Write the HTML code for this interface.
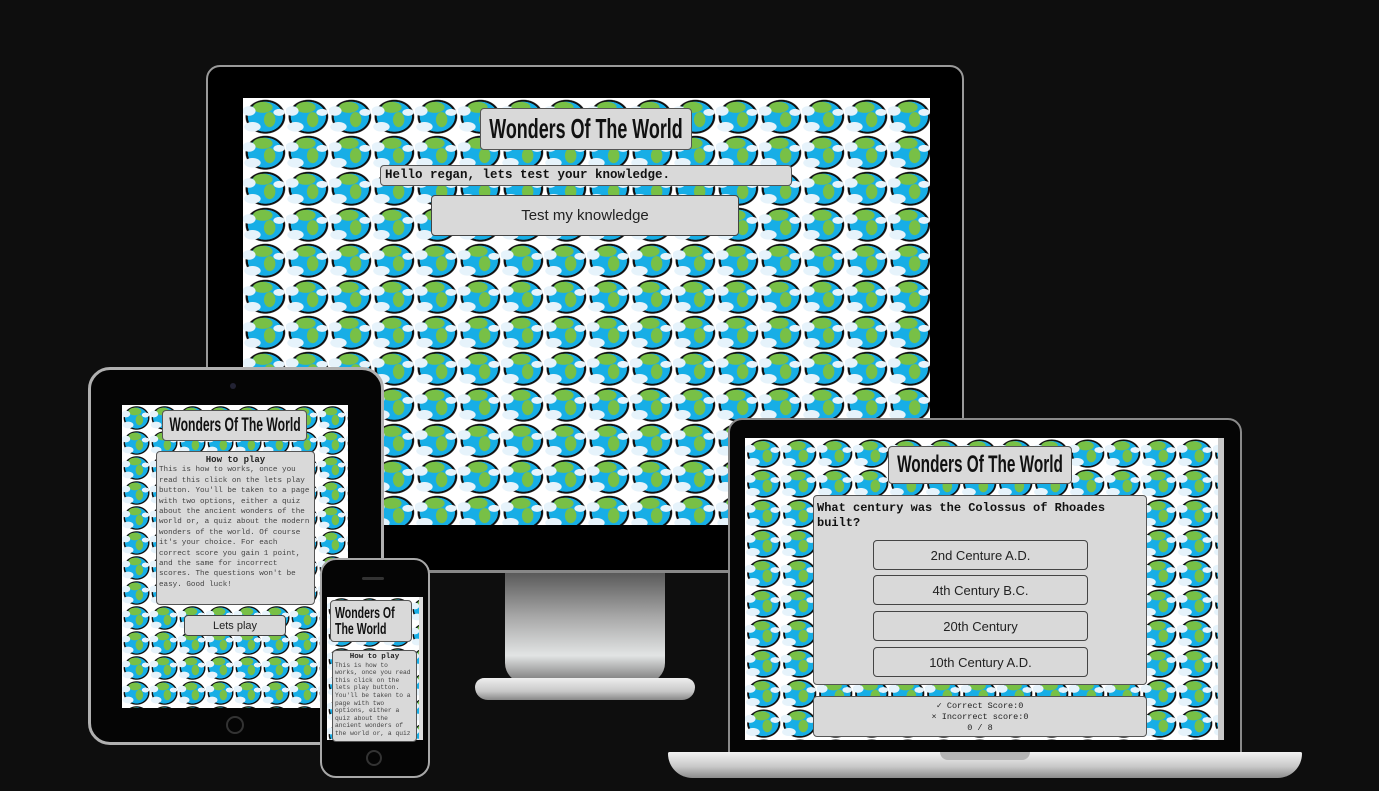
<!DOCTYPE html>
<html><head><meta charset="utf-8"><style>
*{box-sizing:border-box;margin:0;padding:0}
body{width:1379px;height:791px;background:#0e0e0e;position:relative;overflow:hidden;font-family:"Liberation Sans",sans-serif}
.a{position:absolute}
.globe{background:
 radial-gradient(ellipse 20% 14% at 22% 80%,#e6f3fb 0 90%,transparent 100%),
 radial-gradient(ellipse 16% 14% at 14% 36%,#e6f3fb 0 90%,transparent 100%),
 radial-gradient(ellipse 14% 10% at 84% 40%,#e6f3fb 0 90%,transparent 100%),
 radial-gradient(ellipse 14% 22% at 62% 60%,#78c046 0 90%,transparent 100%),
 radial-gradient(ellipse 24% 16% at 46% 26%,#78c046 0 90%,transparent 100%),
 radial-gradient(ellipse 47% 48% at 52% 52%,#17aee6 0 86%,#111 88% 96%,transparent 100%),
 #fff;}
.box{background:#d9d9d9;border:1px solid #555;border-radius:4px}
.ttl{font-weight:bold;color:#111;white-space:nowrap}
.ttl span{position:absolute;left:50%;top:0;transform:translateX(-50%) scaleX(.64)}
.mono{font-family:"Liberation Mono",monospace}
.btn{background:#d9d9d9;border:1px solid #444;border-radius:4px;text-align:center;color:#222}
</style></head><body>

<!-- monitor -->
<div class="a" style="left:206px;top:65px;width:758px;height:508px;background:#000;border:2px solid #9a9a9a;border-radius:14px 14px 0 0"></div>
<div class="a" style="left:206px;top:570px;width:758px;height:3px;background:#888"></div>
<div class="a" style="left:505px;top:573px;width:160px;height:110px;background:linear-gradient(#5a5a5a,#a8a8a8 40%,#e2e4e4 75%,#8a8a8a 95%);border-radius:0 0 20px 20px"></div>
<div class="a" style="left:475px;top:678px;width:220px;height:22px;background:linear-gradient(#eee,#c8c8c8 60%,#888);border-radius:10px 10px 14px 14px"></div>
<div class="a globe" style="left:243px;top:98px;width:687px;height:427px;background-size:43px 36px"></div>
<div class="a box ttl" style="left:480px;top:108px;width:212px;height:42px;font-size:28px;line-height:40px"><span>Wonders Of The World</span></div>
<div class="a box mono" style="left:380px;top:165px;width:412px;height:21px;font-size:12.5px;line-height:19px;padding-left:4px;color:#111;font-weight:bold">Hello regan, lets test your knowledge.</div>
<div class="a btn" style="left:431px;top:195px;width:308px;height:41px;font-size:15px;line-height:40px">Test my knowledge</div>

<!-- tablet -->
<div class="a" style="left:88px;top:367px;width:296px;height:378px;background:#050505;border:3px solid #b0b0b0;border-radius:22px"></div>
<div class="a" style="left:230px;top:383px;width:6px;height:6px;border-radius:50%;background:#223"></div>
<div class="a" style="left:226px;top:716px;width:18px;height:18px;border-radius:50%;border:2px solid #333"></div>
<div class="a globe" style="left:122px;top:405px;width:226px;height:303px;background-size:28px 25px"></div>
<div class="a box ttl" style="left:162px;top:410px;width:145px;height:31px;font-size:19px;line-height:29px"><span>Wonders Of The World</span></div>
<div class="a box mono" style="left:156px;top:451px;width:159px;height:154px;font-size:7.6px;line-height:10.4px;color:#444;padding:3px 2px;overflow:hidden">
<div style="text-align:center;font-weight:bold;color:#222;font-size:9px">How to play</div>This is how to works, once you read this click on the lets play button. You'll be taken to a page with two options, either a quiz about the ancient wonders of the world or, a quiz about the modern wonders of the world. Of course it's your choice. For each correct score you gain 1 point, and the same for incorrect scores. The questions won't be easy. Good luck!</div>
<div class="a btn" style="left:184px;top:615px;width:102px;height:21px;font-size:11px;line-height:20px">Lets play</div>

<!-- phone -->
<div class="a" style="left:320px;top:558px;width:110px;height:220px;background:#050505;border:2px solid #a8a8a8;border-radius:16px"></div>
<div class="a" style="left:362px;top:577px;width:22px;height:3px;border-radius:2px;background:#333"></div>
<div class="a" style="left:366px;top:750px;width:16px;height:16px;border-radius:50%;border:2px solid #333"></div>
<div class="a globe" style="left:327px;top:597px;width:96px;height:143px;background-size:28px 25px"></div>
<div class="a" style="left:419px;top:597px;width:4px;height:143px;background:#ddd"></div>
<div class="a box" style="left:330px;top:600px;width:82px;height:42px;font-size:16px;line-height:16px;font-weight:bold;color:#111;padding:5px 0 0 4px"><div style="transform:scaleX(.66);transform-origin:left top;white-space:nowrap">Wonders Of<br>The World</div></div>
<div class="a box mono" style="left:332px;top:650px;width:85px;height:92px;font-size:6.3px;line-height:7.6px;color:#444;padding:3px 2px;overflow:hidden">
<div style="text-align:center;font-weight:bold;color:#222;font-size:7.5px">How to play</div>This is how to works, once you read this click on the lets play button. You'll be taken to a page with two options, either a quiz about the ancient wonders of the world or, a quiz</div>

<!-- laptop -->
<div class="a" style="left:728px;top:418px;width:514px;height:336px;background:#050505;border:2px solid #8a8a8a;border-radius:14px 14px 0 0"></div>
<div class="a" style="left:668px;top:752px;width:634px;height:26px;background:linear-gradient(#f2f2f2,#c9c9c9 55%,#8c8c8c);border-radius:2px 2px 30px 30px"></div>
<div class="a" style="left:940px;top:752px;width:90px;height:8px;background:#b5b5b5;border-radius:0 0 8px 8px"></div>
<div class="a globe" style="left:745px;top:438px;width:474px;height:302px;background-size:36px 30px"></div>
<div class="a" style="left:1218px;top:438px;width:6px;height:302px;background:#c8c8c8"></div>
<div class="a box ttl" style="left:888px;top:446px;width:184px;height:38px;font-size:24px;line-height:36px"><span>Wonders Of The World</span></div>
<div class="a box" style="left:813px;top:495px;width:334px;height:190px"></div>
<div class="a mono" style="left:817px;top:501px;width:320px;font-size:12px;line-height:15px;font-weight:bold;color:#111">What century was the Colossus of Rhoades built?</div>
<div class="a btn" style="left:873px;top:540px;width:215px;height:30px;font-size:13px;line-height:29px">2nd Centure A.D.</div>
<div class="a btn" style="left:873px;top:575px;width:215px;height:30px;font-size:13px;line-height:29px">4th Century B.C.</div>
<div class="a btn" style="left:873px;top:611px;width:215px;height:30px;font-size:13px;line-height:29px">20th Century</div>
<div class="a btn" style="left:873px;top:647px;width:215px;height:30px;font-size:13px;line-height:29px">10th Century A.D.</div>
<div class="a box mono" style="left:813px;top:696px;width:334px;height:41px;font-size:8.5px;line-height:11px;text-align:center;color:#222;padding-top:4px">✓ Correct Score:0<br>× Incorrect score:0<br>0 / 8</div>
</body></html>
